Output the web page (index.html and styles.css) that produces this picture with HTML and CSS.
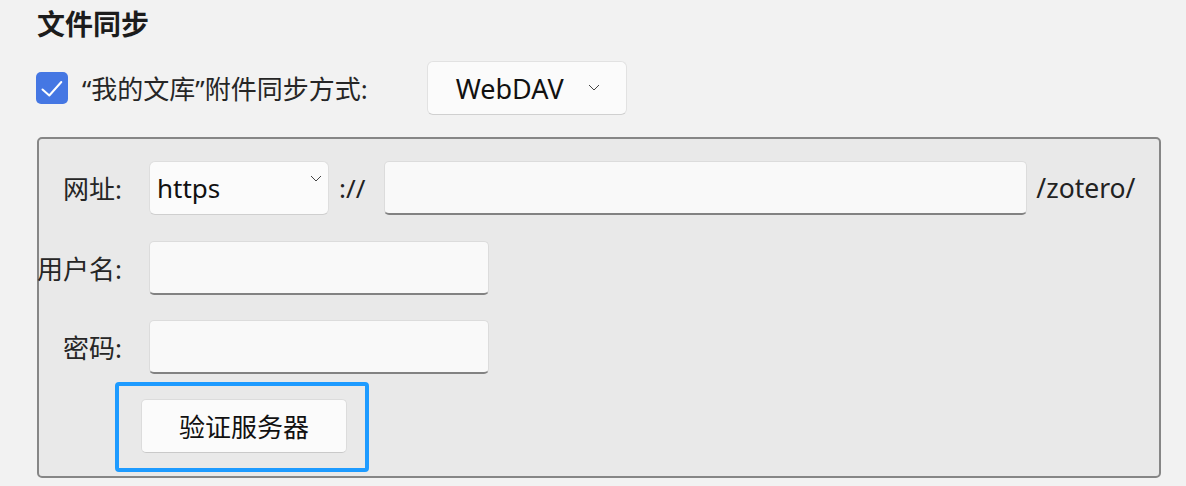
FILE: index.html
```html
<!DOCTYPE html>
<html lang="zh-CN">
<head>
<meta charset="utf-8">
<title>文件同步</title>
<link rel="stylesheet" href="styles.css">
</head>
<body>
<div class="page">
  <h1 class="title">文件同步</h1>
  <div class="sync-row">
    <span class="checkbox" role="checkbox" aria-checked="true">
      <svg width="32" height="32" viewBox="0 0 32 32"><path d="M6.5 17.5 L13.3 23.5 L25.3 10" fill="none" stroke="#fff" stroke-width="2" stroke-linecap="round" stroke-linejoin="round"/></svg>
    </span>
    <span class="sync-label">“我的文库”附件同步方式:</span>
    <div class="dropdown">
      <span class="dropdown-text">WebDAV</span>
      <svg class="chev" width="12" height="7" viewBox="0 0 12 7"><path d="M1 1 L6 6 L11 1" fill="none" stroke="#444" stroke-width="1"/></svg>
    </div>
  </div>
  <div class="group">
    <div class="form">
      <label class="lbl">网址:</label>
      <div class="url-row">
        <div class="select">
          <span class="select-text">https</span>
          <svg class="chev-top" width="12" height="7" viewBox="0 0 12 7"><path d="M1 1 L6 6 L11 1" fill="none" stroke="#444" stroke-width="1"/></svg>
        </div>
        <span class="sep">://</span>
        <div class="input wide"></div>
        <span class="suffix">/zotero/</span>
      </div>
      <label class="lbl">用户名:</label>
      <div class="input short"></div>
      <label class="lbl">密码:</label>
      <div class="input short"></div>
    </div>
    <div class="focus-ring">
      <button class="btn">验证服务器</button>
    </div>
  </div>
</div>
</body>
</html>
```

FILE: styles.css
```css
* { box-sizing: border-box; }
html, body { margin: 0; padding: 0; }
body {
  background: #f2f2f2;
  font-family: "Noto Sans", "Noto Sans CJK SC", sans-serif;
  color: #222;
  width: 1186px;
  height: 486px;
  overflow: hidden;
}
.page { padding-left: 37px; }
.title {
  margin: 0;
  height: 61px;
  padding-top: 3px;
  font-size: 28px;
  line-height: 40px;
  font-weight: 700;
  color: #1c1c1c;
  font-family: "Noto Sans CJK SC", sans-serif;
}
.sync-row {
  display: flex;
  align-items: center;
  height: 54px;
}
.checkbox {
  width: 32px;
  height: 32px;
  border-radius: 5px;
  background: #4577e3;
  display: flex;
  margin-left: -1px;
}
.sync-label {
  margin-left: 14px;
  font-size: 26px;
  color: #262626;
}
.dropdown {
  margin-left: 59px;
  width: 200px;
  height: 54px;
  background: #fbfbfb;
  border: 1px solid #e2e2e2;
  border-bottom-color: #d0d0d0;
  border-radius: 6px;
  display: flex;
  align-items: center;
  padding-left: 28px;
}
.dropdown-text {
  font-size: 27px;
  color: #111;
}
.dropdown .chev { margin-left: 24px; margin-top: -2px; }
.group {
  margin-top: 22px;
  width: 1124px;
  height: 341px;
  background: #e9e9e9;
  border: 2px solid #868686;
  border-radius: 5px;
  padding-top: 22px;
}
.form {
  display: grid;
  grid-template-columns: 83px 1fr;
  grid-auto-rows: 54px;
  column-gap: 27px;
  row-gap: 25.5px;
  align-items: center;
}
.lbl {
  justify-self: end;
  white-space: nowrap;
  font-size: 26px;
  color: #262626;
}
.url-row {
  display: flex;
  align-items: center;
  height: 54px;
}
.select {
  width: 180px;
  height: 54px;
  background: #fbfbfb;
  border: 1px solid #dedede;
  border-bottom-color: #cfcfcf;
  border-radius: 6px;
  display: flex;
  padding-left: 7px;
  padding-right: 6px;
}
.select-text {
  flex: 1;
  align-self: center;
  font-size: 26px;
  color: #111;
}
.chev-top { margin-top: 13px; }
.sep {
  margin-left: 10px;
  font-size: 26px;
  color: #222;
}
.input {
  height: 54px;
  background: #f9f9f9;
  border: 1px solid #dcdcdc;
  border-bottom: 2px solid #828282;
  border-radius: 5px;
}
.input.wide { width: 643px; margin-left: 19px; }
.input.short { width: 340px; }
.suffix {
  margin-left: 9px;
  font-size: 26.5px;
  color: #222;
}
.focus-ring {
  margin-top: 8px;
  margin-left: 76px;
  width: 254px;
  height: 90px;
  border: 4px solid #1e9bff;
  border-radius: 4px;
  padding: 13px 0 0 22px;
}
.btn {
  display: block;
  width: 206px;
  height: 54px;
  background: #fbfbfb;
  border: 1px solid #dcdcdc;
  border-bottom-color: #c9c9c9;
  border-radius: 5px;
  font-family: "Noto Sans", "Noto Sans CJK SC", sans-serif;
  font-size: 26px;
  color: #111;
  padding: 0;
}
```
